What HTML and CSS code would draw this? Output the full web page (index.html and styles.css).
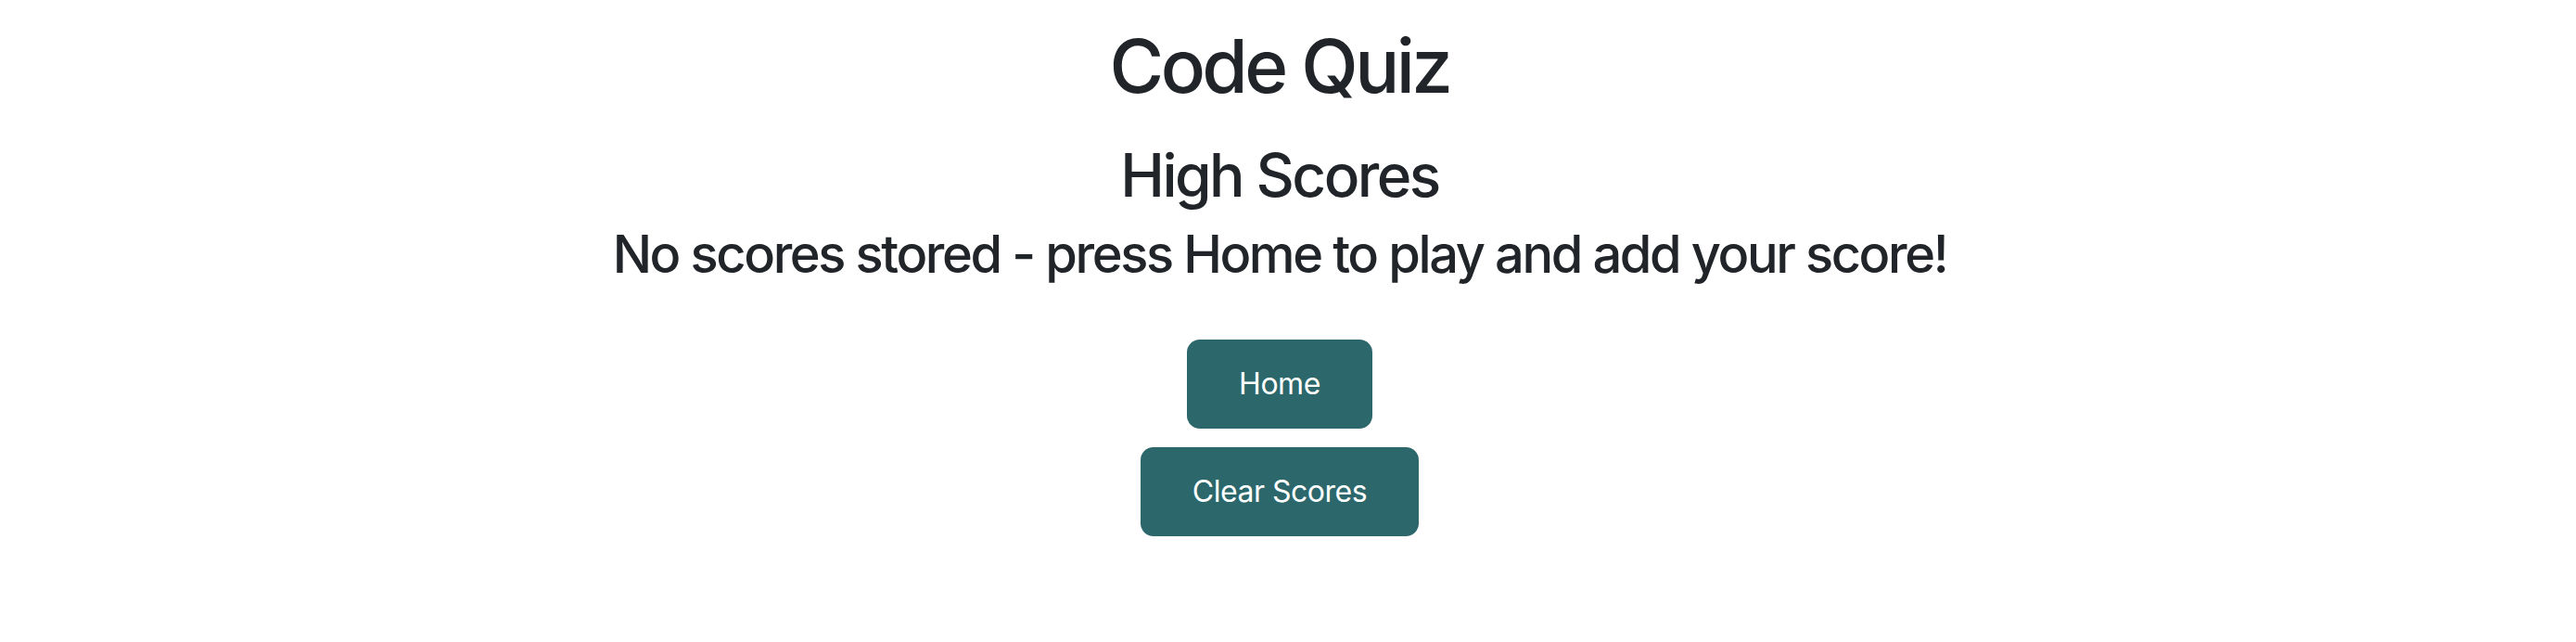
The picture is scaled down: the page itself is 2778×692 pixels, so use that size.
FILE: index.html
```html
<!DOCTYPE html>
<html lang="en">
<head>
<meta charset="utf-8">
<title>Code Quiz - High Scores</title>
<link rel="stylesheet" href="styles.css">
</head>
<body>
  <main class="page">
    <h1 class="title">Code Quiz</h1>
    <h2 class="subtitle">High Scores</h2>
    <h3 class="message">No scores stored - press Home to play and add your score!</h3>
    <div class="actions">
      <button class="btn">Home</button>
      <button class="btn">Clear Scores</button>
    </div>
  </main>
</body>
</html>
```
FILE: styles.css
```css
html, body {
  margin: 0;
  padding: 0;
  background: #ffffff;
}
body {
  font-family: Inter, "Noto Sans", "Liberation Sans", sans-serif;
  color: #212529;
  padding-right: 18px;
}
.page {
  display: flex;
  flex-direction: column;
  align-items: center;
  text-align: center;
}
.title {
  font-size: 80px;
  line-height: 96px;
  font-weight: 500;
  letter-spacing: -0.045em;
  margin: 23px 0 31px;
}
.subtitle {
  font-size: 64px;
  line-height: 77px;
  font-weight: 500;
  letter-spacing: -0.04em;
  margin: 0 0 14px;
}
.message {
  font-size: 56px;
  line-height: 67px;
  font-weight: 500;
  letter-spacing: -0.043em;
  margin: 0 0 58px;
}
.actions {
  display: flex;
  flex-direction: column;
  align-items: center;
  gap: 20px;
}
.btn {
  font-family: inherit;
  font-size: 32px;
  line-height: 48px;
  letter-spacing: -0.015em;
  padding: 24px 56px;
  border: 0;
  border-radius: 14px;
  background: #2c676b;
  color: #ffffff;
}
```
